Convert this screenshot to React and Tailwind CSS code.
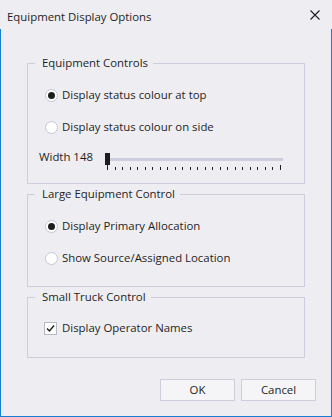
import React from "react";

function Radio({ checked, label }) {
  return (
    <div className="flex items-center h-[16px] gap-[4px]">
      <div className="w-[13px] h-[13px] rounded-full border border-[#c6c6ce] bg-white flex items-center justify-center shrink-0">
        {checked && <div className="w-[7px] h-[7px] rounded-full bg-[#1e1e1e]" />}
      </div>
      <span className="leading-[16px] whitespace-nowrap">{label}</span>
    </div>
  );
}

function Group({ title, className, children }) {
  return (
    <fieldset className={"border border-[#cccedb] " + className}>
      <legend className="ml-[7px] pl-[7px] pr-[5px] leading-[16px] whitespace-nowrap">{title}</legend>
      {children}
    </fieldset>
  );
}

export default function App() {
  const ticks = Array.from({ length: 24 });
  return (
    <div className="w-[332px] h-[417px] bg-[#eeeef2] flex flex-col text-[11.4px] text-[#1e1e1e] font-['Open_Sans',sans-serif]">
      <div className="h-[29px] flex items-start justify-between pl-[7px] pr-[12px] shrink-0">
        <div className="pt-[9px] leading-[16px]">Equipment Display Options</div>
        <svg width="10" height="10" viewBox="0 0 10 10" className="mt-[10px]">
          <path d="M0.5 0.5 L9.5 9.5 M9.5 0.5 L0.5 9.5" stroke="#1e1e1e" strokeWidth="1.1" />
        </svg>
      </div>
      <div className="flex-1 flex flex-col border-x border-b border-[#1a7cd3]">
        <div className="flex flex-col px-[26px]">
          <Group title="Equipment Controls" className="mt-[26px] pb-[13px]">
            <div className="flex flex-col pl-[17px] pt-[16px] gap-[16px]">
              <Radio checked label="Display status colour at top" />
              <Radio label="Display status colour on side" />
            </div>
            <div className="flex items-start pl-[11px] mt-[14px]">
              <div className="w-[66px] leading-[16px] whitespace-nowrap">Width 148</div>
              <div className="w-[178px] flex flex-col mt-[4px]">
                <div className="flex items-center h-[12px]">
                  <div className="w-[5px] h-[12px] bg-[#1e1e1e]" />
                  <div className="flex-1 h-[3px] bg-[#cccedb]" />
                </div>
                <div className="flex items-end justify-between h-[5px] pl-[2px] pr-[2px]">
                  {ticks.map((_, i) => (
                    <div
                      key={i}
                      className={
                        "w-px bg-[#1e1e1e] " + (i === 0 || i === ticks.length - 1 ? "h-[5px]" : "h-[3px]")
                      }
                    />
                  ))}
                </div>
              </div>
            </div>
          </Group>
          <Group title="Large Equipment Control" className="mt-[2px] pb-[20px]">
            <div className="flex flex-col pl-[17px] pt-[16px] gap-[16px]">
              <Radio checked label="Display Primary Allocation" />
              <Radio label="Show Source/Assigned Location" />
            </div>
          </Group>
          <Group title="Small Truck Control" className="mt-[2px] pb-[21px]">
            <div className="flex items-center h-[16px] gap-[5px] pl-[16px] mt-[15px]">
              <div className="w-[13px] h-[13px] border border-[#b9b9c2] bg-white flex items-center justify-center shrink-0">
                <svg width="9" height="9" viewBox="0 0 9 9">
                  <path d="M1 4.5 L3.5 7 L8 1.5" fill="none" stroke="#1e1e1e" strokeWidth="1.4" />
                </svg>
              </div>
              <span className="leading-[16px] whitespace-nowrap">Display Operator Names</span>
            </div>
          </Group>
        </div>
        <div className="flex justify-end gap-[6px] pr-[15px] mt-[21px]">
          <button className="w-[75px] h-[22px] bg-[#f5f5f8] border border-[#cccedb] leading-[16px]">OK</button>
          <button className="w-[75px] h-[22px] bg-[#f5f5f8] border border-[#cccedb] leading-[16px]">Cancel</button>
        </div>
      </div>
    </div>
  );
}
